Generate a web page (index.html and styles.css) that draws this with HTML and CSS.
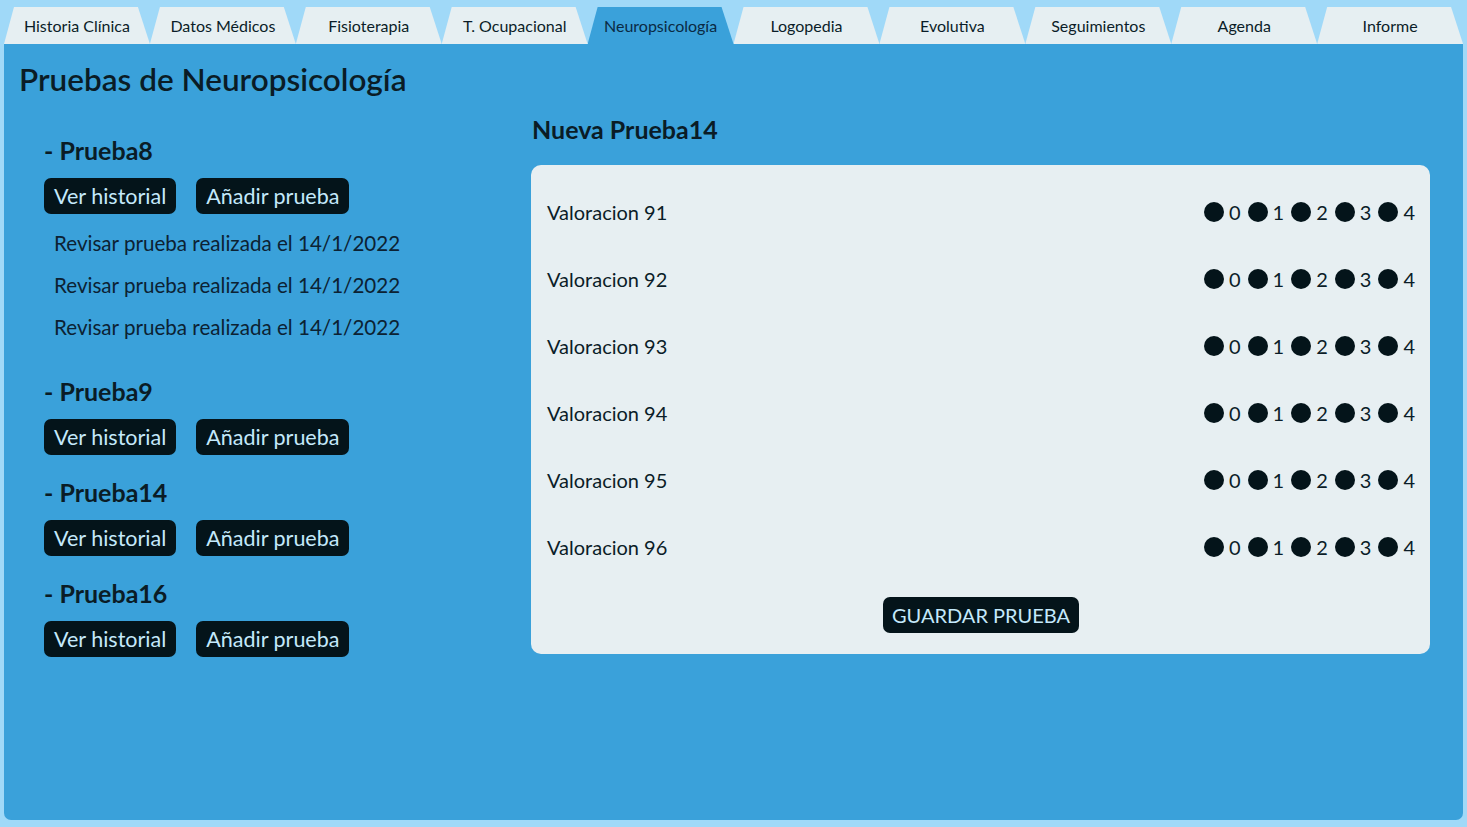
FILE: index.html
```html
<!DOCTYPE html>
<html lang="es">
<head>
<meta charset="utf-8">
<title>Neuropsicología</title>
<link rel="stylesheet" href="styles.css">
</head>
<body>
<nav class="tabs">
  <a class="tab">Historia Clínica</a>
  <a class="tab">Datos Médicos</a>
  <a class="tab">Fisioterapia</a>
  <a class="tab">T. Ocupacional</a>
  <a class="tab active">Neuropsicología</a>
  <a class="tab">Logopedia</a>
  <a class="tab">Evolutiva</a>
  <a class="tab">Seguimientos</a>
  <a class="tab">Agenda</a>
  <a class="tab">Informe</a>
</nav>
<main class="panel">
  <h1 class="title">Pruebas de Neuropsicología</h1>
  <div class="content">
    <section class="tests">
      <div class="group">
        <h2 class="test-name">- Prueba8</h2>
        <div class="actions"><button class="btn">Ver historial</button><button class="btn">Añadir prueba</button></div>
        <ul class="history">
          <li>Revisar prueba realizada el 14/1/2022</li>
          <li>Revisar prueba realizada el 14/1/2022</li>
          <li>Revisar prueba realizada el 14/1/2022</li>
        </ul>
      </div>
      <div class="group">
        <h2 class="test-name">- Prueba9</h2>
        <div class="actions"><button class="btn">Ver historial</button><button class="btn">Añadir prueba</button></div>
      </div>
      <div class="group">
        <h2 class="test-name">- Prueba14</h2>
        <div class="actions"><button class="btn">Ver historial</button><button class="btn">Añadir prueba</button></div>
      </div>
      <div class="group">
        <h2 class="test-name">- Prueba16</h2>
        <div class="actions"><button class="btn">Ver historial</button><button class="btn">Añadir prueba</button></div>
      </div>
    </section>
    <section class="new-test">
      <h2 class="new-title">Nueva Prueba14</h2>
      <div class="card">
        <div class="row"><span class="label">Valoracion 91</span><span class="scale"><i></i>0<i></i>1<i></i>2<i></i>3<i></i>4</span></div>
        <div class="row"><span class="label">Valoracion 92</span><span class="scale"><i></i>0<i></i>1<i></i>2<i></i>3<i></i>4</span></div>
        <div class="row"><span class="label">Valoracion 93</span><span class="scale"><i></i>0<i></i>1<i></i>2<i></i>3<i></i>4</span></div>
        <div class="row"><span class="label">Valoracion 94</span><span class="scale"><i></i>0<i></i>1<i></i>2<i></i>3<i></i>4</span></div>
        <div class="row"><span class="label">Valoracion 95</span><span class="scale"><i></i>0<i></i>1<i></i>2<i></i>3<i></i>4</span></div>
        <div class="row"><span class="label">Valoracion 96</span><span class="scale"><i></i>0<i></i>1<i></i>2<i></i>3<i></i>4</span></div>
        <div class="save-wrap"><button class="btn save">GUARDAR PRUEBA</button></div>
      </div>
    </section>
  </div>
</main>
</body>
</html>
```

FILE: styles.css
```css
* { box-sizing: border-box; }
html, body { margin: 0; }
body {
  background: #a0d9f8;
  padding: 7px 4px 7px 4px;
  font-family: Lato, "Open Sans", sans-serif;
  color: #0b1d28;
}
.tabs {
  display: flex;
  height: 37px;
}
.tab {
  flex: 1;
  display: flex;
  align-items: center;
  justify-content: center;
  background: #e6eff2;
  font-size: 16px;
  color: #0b1d28;
  clip-path: polygon(10px 0, calc(100% - 12px) 0, 100% 100%, 0 100%);
}
.tab.active { background: #3aa1da; color: #0a2a44; }
.panel {
  background: #3aa1da;
  height: 776px;
  border-radius: 0 0 7px 7px;
  padding: 0 33px 0 15px;
}
.title {
  margin: 0;
  padding-top: 17px;
  font-size: 31.5px;
  line-height: 36px;
  font-weight: 600;
  color: #0a1c26;
}
.content {
  display: flex;
}
.tests {
  width: 512px;
  padding-left: 25px;
  padding-top: 38px;
}
.group + .group { margin-top: 22px; }
.test-name {
  margin: 0;
  font-size: 25px;
  line-height: 30px;
  font-weight: 700;
  color: #0a1c26;
}
.actions {
  display: flex;
  gap: 20px;
  margin-top: 13px;
}
.btn {
  font-family: inherit;
  border: 0;
  background: #04141a;
  color: #c4e9fb;
  font-size: 21.5px;
  height: 36px;
  padding: 0 10px;
  border-radius: 7px;
  line-height: 36px;
}
.history {
  list-style: none;
  margin: 0;
  padding: 8px 0 6px 10px;
}
.history li {
  font-size: 20.6px;
  line-height: 42px;
  color: #0c2233;
}
.new-test { flex: 1; }
.new-title {
  margin: 17px 0 0 1px;
  font-size: 25px;
  line-height: 30px;
  font-weight: 700;
  color: #0a1c26;
}
.card {
  margin-top: 21px;
  background: #e7eff2;
  border-radius: 10px;
  padding: 13px 15px 21px 16px;
}
.row {
  height: 67px;
  display: flex;
  align-items: center;
  justify-content: space-between;
  font-size: 20px;
  color: #0b1d28;
}
.scale {
  display: flex;
  align-items: center;
  font-size: 20px;
}
.scale i {
  width: 20px;
  height: 20px;
  border-radius: 50%;
  background: #04141a;
  margin: 0 5px 0 7px;
}
.scale i:first-child { margin-left: 0; }
.save-wrap {
  display: flex;
  justify-content: center;
  margin-top: 17px;
}
.save { font-size: 20px; padding: 0 9px; }
```
